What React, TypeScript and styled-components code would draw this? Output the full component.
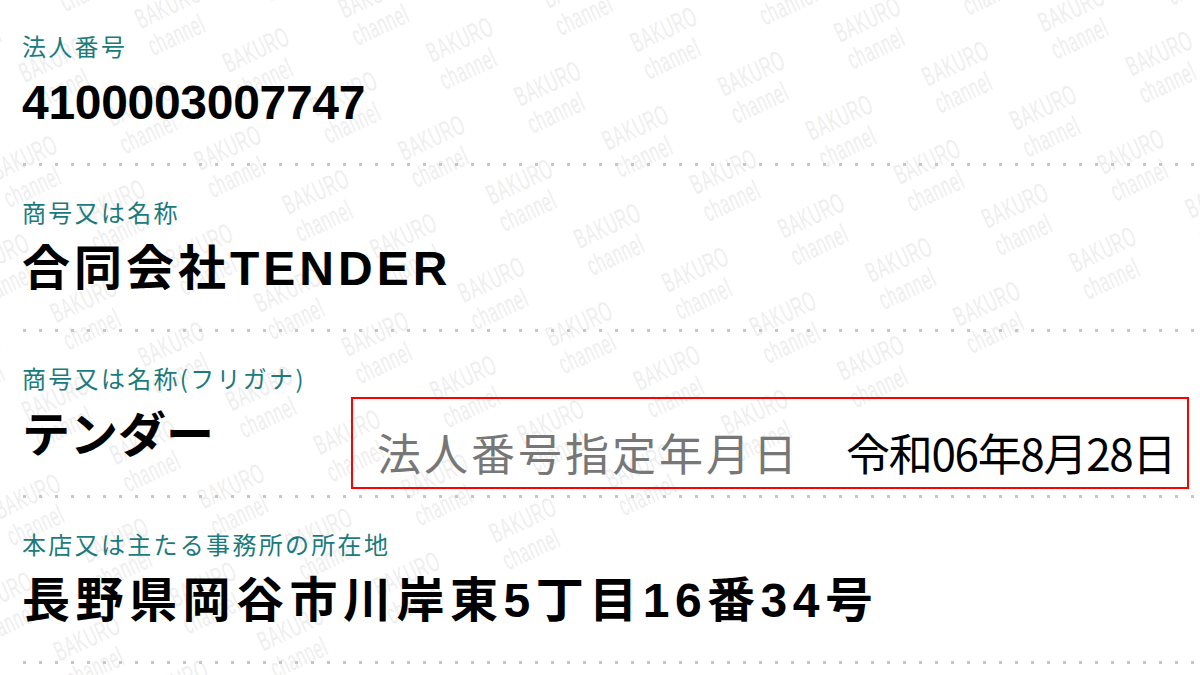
import React from "react";
import styled, { createGlobalStyle } from "styled-components";

const GlobalStyle = createGlobalStyle`
  html, body {
    margin: 0;
    padding: 0;
    background: #ffffff;
  }
  body {
    font-family: "Noto Sans CJK JP", "Liberation Sans", sans-serif;
  }
`;

const Page = styled.div`
  position: relative;
  width: 1200px;
  height: 675px;
  overflow: hidden;
  background: #ffffff;
`;

const WatermarkLayer = styled.div`
  position: absolute;
  inset: 0;
  overflow: hidden;
  pointer-events: none;
  z-index: 0;
`;

const WatermarkSheet = styled.div`
  position: absolute;
  left: -500px;
  top: -700px;
  width: 2400px;
  transform: rotate(-25deg);
  transform-origin: 1100px 1030px;
  display: flex;
  flex-direction: column;
  gap: 17px;
`;

const MarkRow = styled.div`
  display: flex;
  white-space: nowrap;
`;

const Mark = styled.div`
  flex: 0 0 128px;
  width: 128px;
  height: 60px;
  font-family: "Liberation Sans", "DejaVu Sans", sans-serif;
  font-size: 28px;
  line-height: 30px;
  letter-spacing: 1.5px;
  color: #eeeeee;
  transform: scaleX(0.55);
  transform-origin: left top;
`;

const Content = styled.main`
  position: relative;
  z-index: 1;
  display: flex;
  flex-direction: column;
`;

const Row = styled.section`
  display: flex;
  flex-direction: column;
  height: 163px;
  box-sizing: border-box;
  padding: 31px 0 0 22px;
`;

const Label = styled.div`
  font-family: "Noto Sans CJK JP", sans-serif;
  font-size: 24px;
  line-height: 30px;
  letter-spacing: 2.3px;
  color: #1b7b7c;
`;

const Value = styled.div<{ $spacing?: number }>`
  font-family: "Liberation Sans", "Noto Sans CJK JP", sans-serif;
  font-weight: 700;
  font-size: 48px;
  line-height: 60px;
  margin-top: 12px;
  letter-spacing: ${(p) => p.$spacing ?? 0}px;
  color: #000000;
  white-space: nowrap;
`;

const ValueLine = styled.div`
  display: flex;
  align-items: flex-start;
  margin-top: 4px;
`;

const InlineValue = styled(Value)`
  margin-top: 9px;
`;

const DateBox = styled.div`
  box-sizing: border-box;
  width: 838px;
  height: 92px;
  margin-left: auto;
  margin-right: 11px;
  border: 2px solid #ff0000;
  display: flex;
  align-items: center;
  gap: 46px;
  padding: 18px 0 0 24px;
  font-family: "Noto Sans CJK JP", sans-serif;
  font-weight: 400;
  white-space: nowrap;
`;

const DateLabel = styled.span`
  font-size: 44px;
  letter-spacing: 3px;
  color: #777777;
`;

const DateValue = styled.span`
  font-size: 44px;
  letter-spacing: -1.3px;
  color: #000000;
`;

const Divider = styled.div`
  height: 3px;
  margin-left: 23px;
  background-image: linear-gradient(to right, #c6c6c6 3px, transparent 3px);
  background-size: 16px 3px;
  background-repeat: repeat-x;
`;

const ROWS = 16;
const COLS = 22;

function Watermark() {
  return (
    <WatermarkLayer aria-hidden="true">
      <WatermarkSheet>
        {Array.from({ length: ROWS }).map((_, r) => (
          <MarkRow key={r} style={{ marginLeft: (r * 61) % 128 }}>
            {Array.from({ length: COLS }).map((__, c) => (
              <Mark key={c}>
                BAKURO
                <br />
                channel
              </Mark>
            ))}
          </MarkRow>
        ))}
      </WatermarkSheet>
    </WatermarkLayer>
  );
}

export default function App() {
  return (
    <Page>
      <GlobalStyle />
      <Watermark />
      <Content>
        <Row>
          <Label>法人番号</Label>
          <Value $spacing={-0.3}>4100003007747</Value>
        </Row>
        <Divider />
        <Row>
          <Label>商号又は名称</Label>
          <Value $spacing={4}>合同会社TENDER</Value>
        </Row>
        <Divider />
        <Row>
          <Label>商号又は名称(フリガナ)</Label>
          <ValueLine>
            <InlineValue>テンダー</InlineValue>
            <DateBox>
              <DateLabel>法人番号指定年月日</DateLabel>
              <DateValue>令和06年8月28日</DateValue>
            </DateBox>
          </ValueLine>
        </Row>
        <Divider />
        <Row>
          <Label>本店又は主たる事務所の所在地</Label>
          <Value $spacing={5.5}>長野県岡谷市川岸東5丁目16番34号</Value>
        </Row>
        <Divider />
      </Content>
    </Page>
  );
}
